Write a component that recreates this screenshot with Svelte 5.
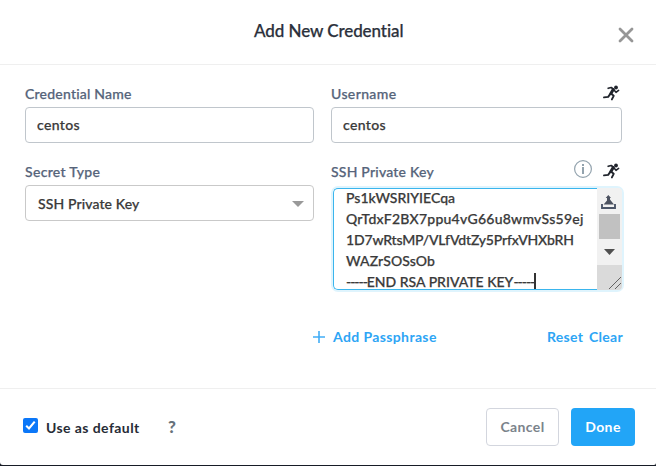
<script>
  let name = $state('centos');
  let username = $state('centos');
  const keyLines = [
    'Ps1kWSRIYIECqa',
    'QrTdxF2BX7ppu4vG66u8wmvSs59ej',
    '1D7wRtsMP/VLfVdtZy5PrfxVHXbRH',
    'WAZrSOSsOb'
  ];
</script>

{#snippet runner()}
  <svg class="runner" width="17" height="16" viewBox="0 0 17 16" fill="none" stroke="#20242c" stroke-linecap="round" stroke-linejoin="round">
    <circle cx="13" cy="2.5" r="1.9" fill="#20242c" stroke="none" />
    <path d="M5.2 3.3 8.2 2.5 10.6 4.2" stroke-width="1.7" />
    <path d="M10.2 4.6 7.9 8.6" stroke-width="3" />
    <path d="M11.2 5.2 13 7.3 15.6 5.4" stroke-width="1.6" />
    <path d="M7.3 8.8 5.2 11.9 1 12.4" stroke-width="1.9" />
    <path d="M8 8.6 10.7 10.8 8.9 14.4" stroke-width="1.9" />
  </svg>
{/snippet}

<div class="dialog">
  <header>
    <h1>Add New Credential</h1>
    <button class="close" aria-label="Close">
      <svg width="16" height="16" viewBox="0 0 16 16"><path d="M2 2 14 14M14 2 2 14" stroke="#969696" stroke-width="2.8" stroke-linecap="round" /></svg>
    </button>
  </header>

  <main>
    <div class="columns">
      <div class="field">
        <div class="label"><label class="l1" for="name">Credential Name</label></div>
        <input id="name" bind:value={name} />
      </div>
      <div class="field wide">
        <div class="label"><label class="l2" for="user">Username</label>{@render runner()}</div>
        <input id="user" bind:value={username} />
      </div>
    </div>
    <div class="columns second">
      <div class="field">
        <div class="label"><span class="l3">Secret Type</span></div>
        <div class="select">
          <span>SSH Private Key</span>
          <svg width="12" height="6" viewBox="0 0 12 6"><path d="M0 0H12L6 6Z" fill="#999" /></svg>
        </div>
      </div>
      <div class="field wide">
        <div class="label">
          <span class="l4">SSH Private Key</span>
          <svg class="info" width="18" height="18" viewBox="0 0 18 18">
            <circle cx="9" cy="9" r="8.4" fill="none" stroke="#93a3ae" stroke-width="1.2" />
            <path d="M8 4H10V6H8ZM8 7H10V14H8Z" fill="#93a3ae" />
          </svg>
          {@render runner()}
        </div>
        <div class="area">
          <div class="text">
            {#each keyLines as line, i}
              <div><span class="k{i}">{line}</span></div>
            {/each}
            <div><span class="dash">-----</span><span>END RSA PRIVATE KEY</span><span class="dash">-----</span><i></i></div>
          </div>
          <div class="scroll">
            <svg class="upload" width="15" height="14" viewBox="0 0 15 14">
              <path d="M1 9V13H14V9" fill="none" stroke="#4b5568" stroke-width="1.9" />
              <path d="M7.3 0 10 3H9V4.5L13 9.6H2.6L6 5.6V3H4.7Z" fill="#4c5260" />
            </svg>
            <div class="thumb"></div>
            <svg class="down" width="11" height="6" viewBox="0 0 11 6"><path d="M0 0H11L5.5 6Z" fill="#505050" /></svg>
            <div class="corner">
              <svg width="12" height="12" viewBox="0 0 12 12"><path d="M0 12 12 0M6 12 12 6" stroke="#555" stroke-width=".9" /></svg>
            </div>
          </div>
        </div>
      </div>
    </div>
    <div class="links">
      <svg width="12" height="12" viewBox="0 0 12 12"><path d="M6 0V12M0 6H12" stroke="#42adf6" stroke-width="1.6" /></svg>
      <a class="add" href="#add">Add Passphrase</a>
      <a class="reset" href="#reset">Reset</a>
      <a class="clear" href="#clear">Clear</a>
    </div>
  </main>

  <footer>
    <span class="check"><svg width="15" height="15" viewBox="0 0 15 15"><path d="M3.2 7.7 6 10.4 11.7 3.6" fill="none" stroke="#fff" stroke-width="2.1" /></svg></span>
    <span class="default">Use as default</span>
    <span class="help">?</span>
    <button class="cancel"><span>Cancel</span></button>
    <button class="done"><span>Done</span></button>
  </footer>
</div>

<style>
  :global(body) { margin: 0; background: #171c26; }
  * { box-sizing: border-box; }
  .dialog {
    width: 656px; height: 465px; background: #fff; border-radius: 0 0 2px 3px;
    font: 500 14px/20px Lato, "Open Sans", sans-serif; color: #3a3a3a;
    -webkit-text-stroke: .25px currentColor;
    display: flex; flex-direction: column; overflow: hidden;
  }
  button { font: inherit; padding: 0; border: 0; background: none; letter-spacing: .4px; }
  span, label, a { white-space: nowrap; }
  header { height: 65px; border-bottom: 1px solid #efefef; display: flex; padding: 20px 22px 0 254px; justify-content: space-between; flex: none; }
  h1 { margin: 0; font: 500 17px/22px Lato, sans-serif; color: #2b303b; white-space: nowrap; letter-spacing: -.08px; }
  .close { height: 16px; width: 16px; margin-top: 7px; }
  .close svg { display: block; }
  main { flex: none; height: 323px; padding: 19px 25px 0; }
  .columns { display: flex; gap: 17px; }
  .second { margin-top: 19px; }
  .field { width: 289px; flex: none; }
  .wide { width: 291px; }
  .label { height: 23px; display: flex; align-items: flex-start; color: #56647a; }
  .l1 { letter-spacing: .22px; }
  .l2 { letter-spacing: .38px; }
  .l3 { letter-spacing: .32px; }
  .l4 { letter-spacing: .22px; }
  .runner { margin: 1px 2px 0 auto; }
  .second .runner { margin: 1px 2px 0 11px; }
  .info { margin: -2px 0 0 auto; overflow: visible; }
  input, .select { width: 100%; height: 36px; border: 1px solid #c0c6cc; border-radius: 4px; display: flex; background: #fff; }
  input { font: inherit; color: inherit; padding: 0 11px 2px; outline: 0; letter-spacing: .38px; -webkit-text-stroke: inherit; }
  .select { align-items: center; justify-content: space-between; padding: 1px 9px 0 12px; border-color: #c9c9c9; letter-spacing: .12px; }
  .area { margin: 3px 0 0 2px; width: 289px; height: 102px; display: flex; border-radius: 5px; box-shadow: 0 0 0 2px #dff4fd; }
  .text { width: 264px; border: 1px solid #3ab5ed; border-right: 0; border-radius: 5px 0 0 5px; padding-left: 12px; overflow: hidden; }
  .text div { height: 21px; line-height: 21px; display: flex; align-items: center; position: relative; top: -2px; }
  .k1 { letter-spacing: .25px; }
  .k2 { letter-spacing: -.17px; }
  .k3 { letter-spacing: .1px; }
  .dash { letter-spacing: -1.05px; }
  .text i { width: 2px; height: 17px; background: #333; }
  .scroll { width: 25px; background: #f1f1f1; display: flex; flex-direction: column; align-items: center; border-radius: 0 4px 4px 0; overflow: hidden; }
  .upload { margin-top: 7px; margin-right: 3px; flex: none; }
  .thumb { width: 21px; height: 25px; background: #c1c1c1; margin-top: 5px; flex: none; }
  .down { margin-top: 10px; flex: none; }
  .corner { width: 25px; height: 25px; margin-top: 10px; background: #dadada; padding: 12px 1px 0 12px; flex: none; }
  .corner svg { display: block; }
  .links { display: flex; margin-top: 35px; padding-left: 288px; align-items: center; height: 24px; }
  a, footer { -webkit-text-stroke: 0; }
  a { color: #2da5f5; text-decoration: none; font-weight: 700; letter-spacing: .3px; }
  .add { margin-left: 8px; width: 214px; letter-spacing: .38px; }
  .reset { width: 42px; }
  footer { height: 77px; flex: none; border-top: 1px solid #efefef; display: flex; padding: 19px 21px 0 23px; font-weight: 700; }
  .check { width: 15px; height: 15px; border-radius: 2px; background: #0b77f8; margin-top: 10px; }
  .check svg { display: block; }
  .default { margin: 10px 0 0 8px; width: 122px; color: #272c36; letter-spacing: .42px; }
  .help { margin-top: 9px; width: 318px; color: #66717a; font-size: 17px; font-weight: 900; }
  .cancel { width: 73px; height: 38px; border: 1px solid #d3d6de; border-radius: 4px; color: #7b838b; }
  .done { width: 64px; height: 38px; border-radius: 4px; background: #22a5f7; color: #fff; margin-left: 12px; }
</style>
